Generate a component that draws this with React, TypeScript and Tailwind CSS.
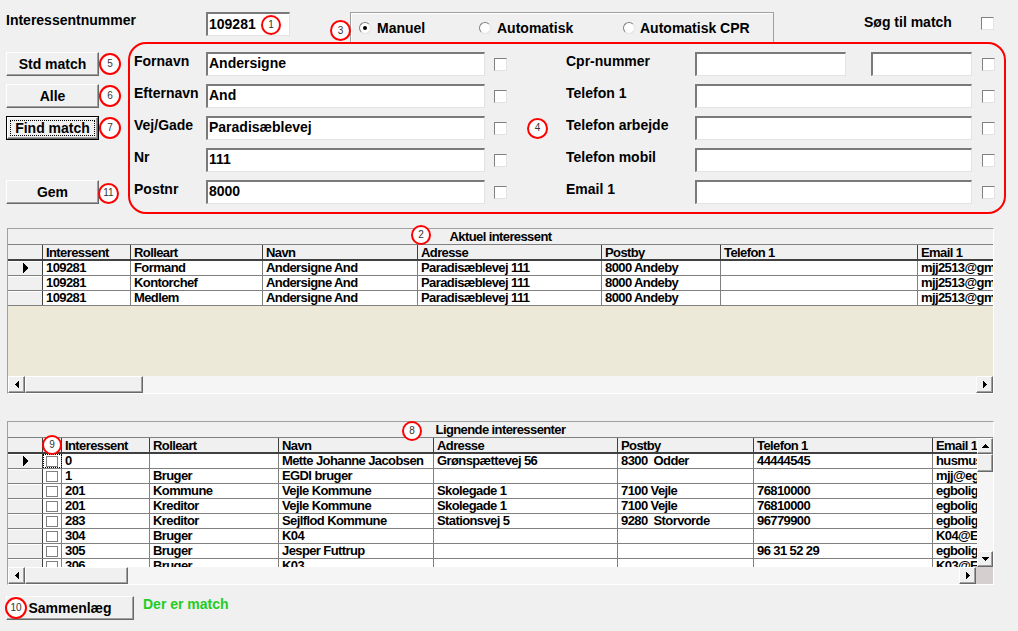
import React from "react";

const raised =
  "bg-[#f0f0f0] border border-t-white border-l-white border-r-[#696969] border-b-[#696969] shadow-[inset_-1px_-1px_0_#a0a0a0]";
const sunken =
  "bg-white border-t-2 border-l-2 border-b border-r border-t-[#7a7a7a] border-l-[#7a7a7a] border-b-[#e3e3e3] border-r-[#e3e3e3]";

function Mark({ n, className }: { n: string; className: string }) {
  return (
    <div
      className={`flex items-center justify-center rounded-full border-2 border-[#ff0000] bg-white text-[10px] font-normal leading-none text-[#333] ${className}`}
    >
      {n}
    </div>
  );
}

function Check({ className = "" }: { className?: string }) {
  return (
    <div
      className={`w-[13px] h-[13px] shrink-0 bg-white border border-t-[#808080] border-l-[#808080] border-r-[#e3e3e3] border-b-[#e3e3e3] ${className}`}
    />
  );
}

function Radio({ on = false }: { on?: boolean }) {
  return (
    <div className="w-[12px] h-[12px] shrink-0 rounded-full bg-white border border-t-[#808080] border-l-[#808080] border-r-[#e3e3e3] border-b-[#e3e3e3] flex items-center justify-center">
      {on && <div className="w-[4px] h-[4px] rounded-full bg-black" />}
    </div>
  );
}

const LeftTri = () => (
  <svg width="4" height="7" viewBox="0 0 4 7" shapeRendering="crispEdges">
    <path d="M4 0V7L0 3.5Z" fill="#000" />
  </svg>
);
const RightTri = () => (
  <svg width="4" height="7" viewBox="0 0 4 7" shapeRendering="crispEdges">
    <path d="M0 0V7L4 3.5Z" fill="#000" />
  </svg>
);
const UpTri = () => (
  <svg width="7" height="4" viewBox="0 0 7 4" shapeRendering="crispEdges">
    <path d="M0 4H7L3.5 0Z" fill="#000" />
  </svg>
);
const DownTri = () => (
  <svg width="7" height="4" viewBox="0 0 7 4" shapeRendering="crispEdges">
    <path d="M0 0H7L3.5 4Z" fill="#000" />
  </svg>
);
const RowTri = () => (
  <svg width="6" height="10" viewBox="0 0 6 10" shapeRendering="crispEdges">
    <path d="M0 0V10L6 5Z" fill="#000" />
  </svg>
);

function HScroll({ thumb, corner }: { thumb: string; corner: boolean }) {
  return (
    <div className="flex h-[17px] shrink-0 bg-[#f5f5f5]">
      <div className={`w-[17px] shrink-0 ${raised} flex items-center justify-center`}>
        <LeftTri />
      </div>
      <div className={`${thumb} shrink-0 ${raised}`} />
      <div className="flex-1" />
      <div className={`w-[17px] shrink-0 ${raised} flex items-center justify-center`}>
        <RightTri />
      </div>
      {corner && <div className="w-[17px] shrink-0 bg-[#d6cfcf]" />}
    </div>
  );
}

type Col = { w: string; h: string };

const g1Cols: Col[] = [
  { w: "w-[88px]", h: "Interessent" },
  { w: "w-[132px]", h: "Rolleart" },
  { w: "w-[155px]", h: "Navn" },
  { w: "w-[184px]", h: "Adresse" },
  { w: "w-[119px]", h: "Postby" },
  { w: "w-[197px]", h: "Telefon 1" },
  { w: "w-[140px]", h: "Email 1" },
];

const g1Rows = [
  ["109281", "Formand", "Andersigne And", "Paradisæblevej 111", "8000 Andeby", "", "mjj2513@gmail.com"],
  ["109281", "Kontorchef", "Andersigne And", "Paradisæblevej 111", "8000 Andeby", "", "mjj2513@gmail.com"],
  ["109281", "Medlem", "Andersigne And", "Paradisæblevej 111", "8000 Andeby", "", "mjj2513@gmail.com"],
];

const g2Cols: Col[] = [
  { w: "w-[88px]", h: "Interessent" },
  { w: "w-[129px]", h: "Rolleart" },
  { w: "w-[155px]", h: "Navn" },
  { w: "w-[184px]", h: "Adresse" },
  { w: "w-[136px]", h: "Postby" },
  { w: "w-[179px]", h: "Telefon 1" },
  { w: "w-[120px]", h: "Email 1" },
];

const g2Rows = [
  ["0", "", "Mette Johanne Jacobsen", "Grønspættevej 56", "8300  Odder", "44444545", "husmus@mail.dk"],
  ["1", "Bruger", "EGDI bruger", "", "", "", "mjj@egdi.dk"],
  ["201", "Kommune", "Vejle Kommune", "Skolegade 1", "7100 Vejle", "76810000", "egbolig@vejle.dk"],
  ["201", "Kreditor", "Vejle Kommune", "Skolegade 1", "7100 Vejle", "76810000", "egbolig@vejle.dk"],
  ["283", "Kreditor", "Sejlflod Kommune", "Stationsvej 5", "9280  Storvorde", "96779900", "egbolig@vejle.dk"],
  ["304", "Bruger", "K04", "", "", "", "K04@EGDI.dk"],
  ["305", "Bruger", "Jesper Futtrup", "", "", "96 31 52 29", "egbolig@vejle.dk"],
  ["306", "Bruger", "K03", "", "", "", "K03@EGDI.dk"],
];

function Indicator({ first }: { first: boolean }) {
  return (
    <div className="w-[35px] shrink-0 bg-[#f0f0f0] border-r border-[#404040] shadow-[inset_0_1px_0_#fff] flex items-center pl-[15px]">
      {first && <RowTri />}
    </div>
  );
}

function HeaderRow({ cols, check }: { cols: Col[]; check: boolean }) {
  return (
    <div className="flex h-[16px] shrink-0 border-b-2 border-[#404040] overflow-hidden">
      <div className="w-[35px] shrink-0 bg-[#f0f0f0] border-r border-[#404040]" />
      {check && <div className="w-[19px] shrink-0 bg-[#f0f0f0] border-r border-[#404040]" />}
      {cols.map((c, i) => (
        <div
          key={i}
          className={`${c.w} shrink-0 bg-[#f0f0f0] border-r border-[#404040] pl-[3px] pt-[1px] overflow-hidden whitespace-nowrap`}
        >
          {c.h}
        </div>
      ))}
    </div>
  );
}

function DataRow({ cols, cells, first, check }: { cols: Col[]; cells: string[]; first: boolean; check: boolean }) {
  return (
    <div className="flex h-[15px] shrink-0 border-b border-[#808080] overflow-hidden">
      <Indicator first={first} />
      {check && (
        <div
          className={`w-[19px] shrink-0 bg-white border-r border-[#808080] flex items-center justify-center ${
            first ? "outline-1 outline-dotted outline-black -outline-offset-1" : ""
          }`}
        >
          <div className="w-[12px] h-[11px] border border-[#808080] bg-white" />
        </div>
      )}
      {cols.map((c, i) => (
        <div
          key={i}
          className={`${c.w} shrink-0 bg-white border-r border-[#808080] pl-[3px] overflow-hidden whitespace-pre`}
        >
          {cells[i]}
        </div>
      ))}
    </div>
  );
}

function FieldL({ label, value }: { label: string; value: string }) {
  return (
    <div className="flex h-[24px] items-start">
      <div className="w-[72px] shrink-0 pt-[1px]">{label}</div>
      <div className={`w-[279px] h-[24px] shrink-0 pl-[1px] pt-[1px] ${sunken}`}>{value}</div>
      <Check className="ml-[9px] mt-[6px]" />
    </div>
  );
}

function FieldR({ label }: { label: string }) {
  return (
    <div className="flex h-[24px] items-start">
      <div className="w-[129px] shrink-0 pt-[1px] whitespace-nowrap">{label}</div>
      <div className={`w-[277px] h-[24px] shrink-0 ${sunken}`} />
      <Check className="ml-[10px] mt-[6px]" />
    </div>
  );
}

function Btn({ children, className = "" }: { children: React.ReactNode; className?: string }) {
  return (
    <div className={`w-[93px] h-[24px] shrink-0 ${raised} flex items-center justify-center ${className}`}>
      {children}
    </div>
  );
}

export default function App() {
  return (
    <div className="relative w-[1018px] h-[631px] overflow-hidden bg-[#f0f0f0] text-black font-['Liberation_Sans',Arial,sans-serif] text-[14px] font-bold leading-[16px]">
      {/* top bar */}
      <div className="flex h-[42px]">
        <div className="w-[206px] shrink-0 pl-[6px] pt-[12px]">Interessentnummer</div>
        <div className={`mt-[12px] w-[84px] h-[24px] shrink-0 pl-[1px] pt-[2px] ${sunken}`}>109281</div>
        <div className="w-[60px] shrink-0" />
        <div className="w-[424px] h-[30px] shrink-0 mt-[12px] border-t border-l border-r border-[#a0a0a0] shadow-[inset_1px_1px_0_#fff] flex pl-[8px] pt-[7px]">
          <div className="w-[120px] h-[16px] flex items-center gap-[6px]">
            <Radio on />
            <span>Manuel</span>
          </div>
          <div className="w-[144px] h-[16px] flex items-center gap-[6px]">
            <Radio />
            <span>Automatisk</span>
          </div>
          <div className="h-[16px] flex items-center gap-[5px]">
            <Radio />
            <span>Automatisk CPR</span>
          </div>
        </div>
        <div className="w-[117px] shrink-0 ml-[90px] pt-[14px] whitespace-nowrap">Søg til match</div>
        <Check className="mt-[17px]" />
      </div>

      {/* form section */}
      <div className="flex h-[172px]">
        <div className="w-[128px] shrink-0 pl-[6px] pt-[10px] flex flex-col">
          <div className="flex items-center h-[24px]">
            <Btn>Std match</Btn>
            <Mark n="5" className="w-[22px] h-[22px]" />
          </div>
          <div className="flex items-center h-[24px] mt-[8px]">
            <Btn>Alle</Btn>
            <Mark n="6" className="w-[22px] h-[22px]" />
          </div>
          <div className="flex items-center h-[24px] mt-[8px]">
            <div className="w-[93px] h-[24px] shrink-0 border border-black">
              <div className={`w-full h-full ${raised} flex items-center justify-center p-[2px]`}>
                <div className="w-full h-full border border-dotted border-black flex items-center justify-center">
                  Find match
                </div>
              </div>
            </div>
            <Mark n="7" className="w-[22px] h-[22px]" />
          </div>
          <div className="flex items-center h-[24px] mt-[40px]">
            <Btn>Gem</Btn>
            <Mark n="11" className="w-[21px] h-[21px] -ml-[1px] mt-[2px]" />
          </div>
        </div>

        <div className="w-[878px] h-[172px] shrink-0 border-2 border-[#ff0000] rounded-[18px] flex pl-[4px] pt-[8px]">
          <div className="flex flex-col gap-[8px]">
            <FieldL label="Fornavn" value="Andersigne" />
            <FieldL label="Efternavn" value="And" />
            <FieldL label="Vej/Gade" value="Paradisæblevej" />
            <FieldL label="Nr" value="111" />
            <FieldL label="Postnr" value="8000" />
          </div>
          <div className="w-[59px] h-[152px] shrink-0 flex items-center justify-center">
            <Mark n="4" className="w-[21px] h-[21px] ml-[2px]" />
          </div>
          <div className="flex flex-col gap-[8px]">
            <div className="flex h-[24px] items-start">
              <div className="w-[129px] shrink-0 pt-[1px]">Cpr-nummer</div>
              <div className={`w-[151px] h-[24px] shrink-0 ${sunken}`} />
              <div className="w-[25px] shrink-0" />
              <div className={`w-[101px] h-[24px] shrink-0 ${sunken}`} />
              <Check className="ml-[10px] mt-[6px]" />
            </div>
            <FieldR label="Telefon 1" />
            <FieldR label="Telefon arbejde" />
            <FieldR label="Telefon mobil" />
            <FieldR label="Email 1" />
          </div>
        </div>
      </div>

      {/* grid 1 */}
      <div className="ml-[7px] mt-[14px] w-[987px] h-[166px] border border-t-[#a0a0a0] border-l-[#a0a0a0] border-r-white border-b-white flex flex-col text-[13px] tracking-[-0.6px] leading-[14px]">
        <div className="h-[16px] shrink-0 border-b border-[#808080] bg-[#f0f0f0] text-center pt-[1px]">
          Aktuel interessent
        </div>
        <HeaderRow cols={g1Cols} check={false} />
        {g1Rows.map((r, i) => (
          <DataRow key={i} cols={g1Cols} cells={r} first={i === 0} check={false} />
        ))}
        <div className="flex-1 bg-[#ece9d8]" />
        <HScroll thumb="w-[118px]" corner={false} />
      </div>

      {/* grid 2 */}
      <div className="ml-[7px] mt-[27px] w-[987px] h-[164px] border border-t-[#a0a0a0] border-l-[#a0a0a0] border-r-white border-b-white flex flex-col text-[13px] tracking-[-0.6px] leading-[14px]">
        <div className="h-[16px] shrink-0 border-b border-[#808080] bg-[#f0f0f0] text-center pt-[1px]">
          Lignende interessenter
        </div>
        <div className="flex h-[129px] shrink-0">
          <div className="w-[969px] shrink-0 flex flex-col overflow-hidden bg-white">
            <HeaderRow cols={g2Cols} check />
            {g2Rows.map((r, i) => (
              <DataRow key={i} cols={g2Cols} cells={r} first={i === 0} check />
            ))}
          </div>
          <div className="w-[16px] shrink-0 flex flex-col bg-[#f5f5f5]">
            <div className={`h-[16px] shrink-0 ${raised} flex items-center justify-center`}>
              <UpTri />
            </div>
            <div className={`h-[18px] shrink-0 ${raised}`} />
            <div className="flex-1" />
            <div className={`h-[16px] shrink-0 ${raised} flex items-center justify-center`}>
              <DownTri />
            </div>
          </div>
        </div>
        <HScroll thumb="w-[103px]" corner />
      </div>

      {/* bottom */}
      <div className="flex items-start mt-[11px] pl-[6px]">
        <div className={`w-[128px] h-[24px] shrink-0 ${raised} flex items-center justify-center`}>Sammenlæg</div>
        <div className="ml-[9px] text-[#22cc22]">Der er match</div>
      </div>

      {/* annotation markers */}
      <Mark n="1" className="absolute left-[261px] top-[15px] w-[20px] h-[20px]" />
      <Mark n="3" className="absolute left-[330px] top-[20px] w-[21px] h-[21px]" />
      <Mark n="2" className="absolute left-[411px] top-[225px] w-[20px] h-[20px]" />
      <Mark n="8" className="absolute left-[402px] top-[421px] w-[20px] h-[20px]" />
      <Mark n="9" className="absolute left-[42px] top-[435px] w-[20px] h-[20px]" />
      <Mark n="10" className="absolute left-[5px] top-[597px] w-[22px] h-[22px]" />
    </div>
  );
}
